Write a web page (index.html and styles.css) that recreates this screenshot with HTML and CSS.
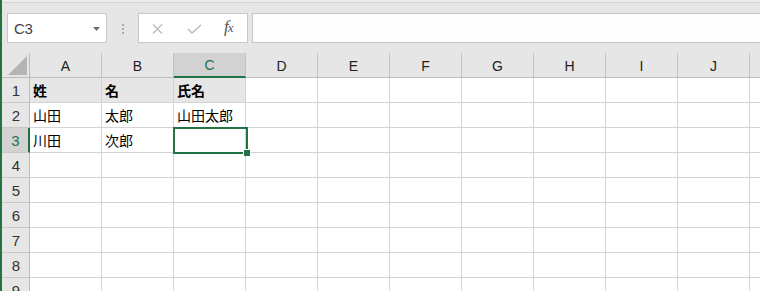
FILE: index.html
```html
<!DOCTYPE html>
<html lang="ja">
<head>
<meta charset="utf-8">
<title>Excel</title>
<link rel="stylesheet" href="styles.css">
</head>
<body>
<div class="app">
  <div class="topline"></div>
  <div class="fbar">
    <div class="namebox">
      <span class="nb-text">C3</span>
      <svg class="nb-arrow" width="7" height="4" viewBox="0 0 7 4"><path d="M0 0H7L3.5 4Z" fill="#6f6f6f"/></svg>
    </div>
    <div class="dots"><span></span><span></span><span></span></div>
    <div class="fbtns">
      <svg class="ic-x" width="11" height="10" viewBox="0 0 11 10"><path d="M1 0.5L10 9.5M10 0.5L1 9.5" stroke="#bdbdbd" stroke-width="1.4" fill="none"/></svg>
      <svg class="ic-ok" width="15" height="10" viewBox="0 0 15 10"><path d="M1 5L5 9L14 1" stroke="#bdbdbd" stroke-width="1.6" fill="none"/></svg>
      <span class="fx"><i>f</i><span class="fx-x">x</span></span>
    </div>
    <div class="finput"></div>
  </div>
  <div class="sheet">
    <div class="corner"><svg width="19" height="19" viewBox="0 0 19 19"><path d="M19 0V19H0Z" fill="#b4b4b4"/></svg></div>
    <div class="ch">A</div>
    <div class="ch">B</div>
    <div class="ch sel">C</div>
    <div class="ch">D</div>
    <div class="ch">E</div>
    <div class="ch">F</div>
    <div class="ch">G</div>
    <div class="ch">H</div>
    <div class="ch">I</div>
    <div class="ch">J</div>
    <div class="ch"></div>

    <div class="rh">1</div>
    <div class="c fill b">姓</div><div class="c fill b">名</div><div class="c fill b">氏名</div>
    <div class="c"></div><div class="c"></div><div class="c"></div><div class="c"></div><div class="c"></div><div class="c"></div><div class="c"></div><div class="c"></div>

    <div class="rh">2</div>
    <div class="c">山田</div><div class="c">太郎</div><div class="c">山田太郎</div>
    <div class="c"></div><div class="c"></div><div class="c"></div><div class="c"></div><div class="c"></div><div class="c"></div><div class="c"></div><div class="c"></div>

    <div class="rh sel">3</div>
    <div class="c">川田</div><div class="c">次郎</div><div class="c active"><div class="selbox"><span class="handle"></span></div></div>
    <div class="c"></div><div class="c"></div><div class="c"></div><div class="c"></div><div class="c"></div><div class="c"></div><div class="c"></div><div class="c"></div>

    <div class="rh">4</div>
    <div class="c"></div><div class="c"></div><div class="c"></div><div class="c"></div><div class="c"></div><div class="c"></div><div class="c"></div><div class="c"></div><div class="c"></div><div class="c"></div><div class="c"></div>

    <div class="rh">5</div>
    <div class="c"></div><div class="c"></div><div class="c"></div><div class="c"></div><div class="c"></div><div class="c"></div><div class="c"></div><div class="c"></div><div class="c"></div><div class="c"></div><div class="c"></div>

    <div class="rh">6</div>
    <div class="c"></div><div class="c"></div><div class="c"></div><div class="c"></div><div class="c"></div><div class="c"></div><div class="c"></div><div class="c"></div><div class="c"></div><div class="c"></div><div class="c"></div>

    <div class="rh">7</div>
    <div class="c"></div><div class="c"></div><div class="c"></div><div class="c"></div><div class="c"></div><div class="c"></div><div class="c"></div><div class="c"></div><div class="c"></div><div class="c"></div><div class="c"></div>

    <div class="rh">8</div>
    <div class="c"></div><div class="c"></div><div class="c"></div><div class="c"></div><div class="c"></div><div class="c"></div><div class="c"></div><div class="c"></div><div class="c"></div><div class="c"></div><div class="c"></div>

    <div class="rh">9</div>
    <div class="c"></div><div class="c"></div><div class="c"></div><div class="c"></div><div class="c"></div><div class="c"></div><div class="c"></div><div class="c"></div><div class="c"></div><div class="c"></div><div class="c"></div>
  </div>
</div>
</body>
</html>
```

FILE: styles.css
```css
* { box-sizing: border-box; }
html, body { margin: 0; padding: 0; }
body {
  width: 760px;
  height: 291px;
  overflow: hidden;
  background: #e6e6e6;
  font-family: "Liberation Sans", "Noto Sans CJK JP", sans-serif;
}
.app {
  width: 760px;
  height: 291px;
  overflow: hidden;
  border-left: 2px solid #217346;
  background: #e6e6e6;
}
.topline {
  height: 3px;
  background: #ebebeb;
  border-bottom: 1px solid #d3d3d3;
}
.fbar {
  height: 50px;
  display: flex;
  align-items: center;
  padding-left: 5px;
  white-space: nowrap;
}
.namebox {
  width: 100px;
  height: 30px;
  flex: none;
  background: #fff;
  border: 1px solid #c8c8c8;
  display: flex;
  align-items: center;
  justify-content: space-between;
  padding: 0 6px 0 6px;
}
.nb-text {
  font-size: 15px;
  color: #444;
  letter-spacing: -0.3px;
}
.nb-arrow { margin-top: 1px; }
.dots {
  width: 31px;
  flex: none;
  display: flex;
  flex-direction: column;
  align-items: center;
  gap: 2px;
  padding-top: 2px;
}
.dots span {
  width: 2px;
  height: 2px;
  background: #ababab;
  display: block;
}
.fbtns {
  width: 110px;
  height: 30px;
  flex: none;
  background: #fff;
  border: 1px solid #c8c8c8;
  display: flex;
  align-items: center;
  padding-left: 13px;
}
.ic-x { margin-right: 24px; margin-top: 1px; }
.ic-ok { margin-right: 22px; margin-top: 2px; }
.fx {
  font-family: "Liberation Serif", serif;
  color: #555;
  font-size: 17px;
  margin-top: -2px;
  letter-spacing: -1px;
}
.fx i { font-style: italic; }
.fx-x { font-size: 13px; font-style: italic; }
.finput {
  flex: 1;
  height: 30px;
  margin-left: 4px;
  margin-right: -4px;
  background: #fdfdfd;
  border: 1px solid #c8c8c8;
}
.sheet {
  display: grid;
  grid-template-columns: 28px repeat(10, 72px) 40px;
  grid-auto-rows: 25px;
  background: #fff;
}
.corner {
  background: #e6e6e6;
  border-right: 1px solid #bcbcbc;
  border-bottom: 1px solid #bcbcbc;
  display: flex;
  align-items: flex-end;
  justify-content: flex-end;
  padding: 0 2px 2px 0;
}
.ch {
  background: #e6e6e6;
  border-right: 1px solid #c3c3c3;
  border-bottom: 1px solid #bcbcbc;
  text-align: center;
  font-size: 14px;
  line-height: 26px;
  color: #222;
}
.ch.sel {
  background: #d2d2d2;
  color: #217346;
  border-bottom: 2px solid #217346;
  line-height: 25px;
}
.rh {
  background: #e6e6e6;
  border-right: 1px solid #bcbcbc;
  border-bottom: 1px solid #c9c9c9;
  text-align: center;
  font-size: 15px;
  line-height: 25px;
  color: #333;
  padding-left: 1px;
}
.rh.sel {
  background: #d2d2d2;
  color: #217346;
  border-right: 2px solid #217346;
}
.c {
  background: #fff;
  border-right: 1px solid #d4d4d4;
  border-bottom: 1px solid #d4d4d4;
  font-family: "Noto Sans CJK JP", sans-serif;
  font-size: 14px;
  line-height: 25px;
  padding-left: 3px;
  color: #000;
  white-space: nowrap;
}
.c.fill { background: #e7e6e6; }
.c.b { font-weight: bold; }
.c.active { position: relative; }
.selbox {
  position: absolute;
  left: -1px;
  top: -1px;
  width: 75px;
  height: 27px;
  border: 2px solid #217346;
}
.handle {
  position: absolute;
  right: -4px;
  bottom: -4px;
  width: 7px;
  height: 7px;
  background: #217346;
  border: 1px solid #fff;
  border-right: none;
  border-bottom: none;
}
```
